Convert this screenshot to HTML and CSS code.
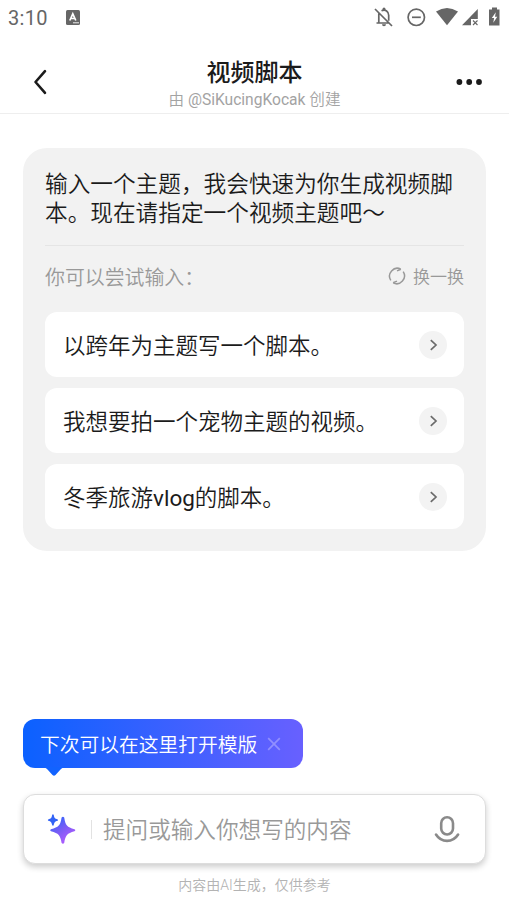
FILE: index.html
```html
<!DOCTYPE html>
<html lang="zh-CN">
<head>
<meta charset="utf-8">
<title>视频脚本</title>
<link rel="stylesheet" href="styles.css">
</head>
<body>
<div class="app">
  <div class="status">
    <span class="clock">3:10</span>
    <svg class="app-badge" width="14" height="15" viewBox="0 0 14 15"><rect width="14" height="15" rx="1.5" fill="#666"/><path d="M3.8 10.5 6.8 3.8 9.8 10.5M4.9 8.5h3.8" fill="none" stroke="#fff" stroke-width="1.7"/><path d="M7 12.8h6" stroke="#fff" stroke-width=".9"/></svg>
    <svg class="status-icons" width="143" height="34" viewBox="366 0 143 34">
      <g fill="none" stroke="#666" stroke-width="1.7">
        <path d="M375 9l17 17M378.8 13.500v9.200M376.500 23h13M381.500 10.800c4-2 7.200 1 7.200 4.500v5.500"/>
        <circle cx="416.300" cy="17.300" r="8.200"/><path d="M412 17.300h8.800"/>
      </g>
      <path d="M382.500 10V9a1.500 1.500 0 0 1 3 0v1zM382 24.200h4a2 2 0 0 1-4 0z" fill="#666"/>
      <path d="M436 11.500q11-7 22 0L447 25.300z" fill="#666"/>
      <path d="M477.800 9v10H471v6.300h-9z" fill="#666"/><path d="M473 20.500l4.500 4.500m0-4.500L473 25" stroke="#666" stroke-width="1.100"/>
      <path d="M492 7.500h5v2h2.500v16h-10.500v-16h3z" fill="#666"/><path d="M495.800 12.200l-4 5.800h2.300l-.8 4.700 4-6h-2.300z" fill="#fff"/>
    </svg>
  </div>

  <header class="header">
    <svg class="back" width="28" height="28" viewBox="0 0 28 28"><path d="M14 3.200 4.500 14 14 24.800" fill="none" stroke="#1b1b1b" stroke-width="2.600" stroke-linecap="round" stroke-linejoin="round"/></svg>
    <div class="heading">
      <h1>视频脚本</h1>
      <p>由 <span class="latin">@SiKucingKocak</span> 创建</p>
    </div>
    <svg class="more" width="28" height="8" viewBox="0 0 28 8" fill="#1b1b1b"><circle cx="4.400" cy="4" r="2.900"/><circle cx="14.200" cy="4" r="2.900"/><circle cx="24" cy="4" r="2.900"/></svg>
  </header>

  <main class="card">
    <p class="intro">输入一个主题，我会快速为你生成视频脚本。现在请指定一个视频主题吧～</p>
    <div class="hint">
      <span class="hint-label">你可以尝试输入：</span>
      <span class="refresh">
        <svg width="18" height="18" viewBox="0 0 18 18" fill="none" stroke="#999" stroke-width="1.500"><path d="M2.800 13.300A7.800 7.800 0 0 1 12.800 2.100M9 3.900l3.900-1.700M15.200 4.700A7.800 7.800 0 0 1 5.200 15.900M9 14.100l-3.900 1.700"/></svg>
        <span class="refresh-label">换一换</span>
      </span>
    </div>
    <ul class="options">
      <li><span>以跨年为主题写一个脚本。</span><i class="go"><svg width="28" height="28" viewBox="0 0 28 28"><path d="M11.800 9.200 17 14l-5.200 4.900" fill="none" stroke="#6b6b6b" stroke-width="1.700"/></svg></i></li>
      <li><span>我想要拍一个宠物主题的视频。</span><i class="go"><svg width="28" height="28" viewBox="0 0 28 28"><path d="M11.800 9.200 17 14l-5.200 4.900" fill="none" stroke="#6b6b6b" stroke-width="1.700"/></svg></i></li>
      <li><span>冬季旅游<span class="latin">vlog</span>的脚本。</span><i class="go"><svg width="28" height="28" viewBox="0 0 28 28"><path d="M11.800 9.200 17 14l-5.200 4.900" fill="none" stroke="#6b6b6b" stroke-width="1.700"/></svg></i></li>
    </ul>
  </main>

  <footer class="bottom">
    <div class="tip">
      <span>下次可以在这里打开模版</span>
      <svg width="14" height="14" viewBox="0 0 14 14"><path d="M1.200 1.200l11.600 11.600m0-11.600L1.200 12.800" stroke="#918fff" stroke-width="1.700"/></svg>
      <svg class="tail" width="24" height="10" viewBox="0 0 24 10"><path d="M0 0h24c-2.500 0-4 1-5.500 2.500l-5 5.500q-1.500 1.500-3 0l-5-5.500C4 1 2.500 0 0 0z" fill="#1263ff"/></svg>
    </div>
    <div class="composer">
      <svg class="spark" width="30" height="32" viewBox="0 0 30 32">
        <defs><linearGradient id="g" x1="0" y1="0" x2=".65" y2="1"><stop offset=".2" stop-color="#3b63fb"/><stop offset=".55" stop-color="#7b5cf5"/><stop offset="1" stop-color="#b45cff"/></linearGradient></defs>
        <path d="M15.600 4.500Q17 3 18.200 4.500C19.500 12.500 21 14 28.500 16.200q1.600 1 0 2C21 20.400 19.500 22 18.200 30q-1.300 1.500-2.600 0C14.300 22 12.800 20.400 5 18.200q-1.500-1 0-2C12.800 14 14.300 12.500 15.600 4.500z" fill="url(#g)"/>
        <path d="M6.200 1.800q.8-1 1.500 0C8.300 5 8.800 5.600 11.700 6.500q.8.600 0 1.200C8.800 8.500 8.300 9.100 7.700 12.300q-.7.900-1.500 0C5.600 9.100 5.100 8.500 2.200 7.700q-.8-.6 0-1.200C5.100 5.600 5.600 5 6.200 1.800z" fill="#3263f6"/>
      </svg>
      <span class="divider"></span>
      <span class="placeholder">提问或输入你想写的内容</span>
      <svg class="mic" width="26" height="30" viewBox="0 0 26 30" fill="none" stroke="#8a8a8a" stroke-width="2.600" stroke-linecap="round"><rect x="7.200" y="3.300" width="11.800" height="17.200" rx="5.900"/><path d="M2 20.500c5.300 8.500 16.800 8.500 22.100 0"/></svg>
    </div>
    <p class="note">内容由AI生成，仅供参考</p>
  </footer>
</div>
</body>
</html>
```
FILE: styles.css
```css
* { box-sizing: border-box; margin: 0; padding: 0; }
body {
  background: #fff;
  color: #1b1b1b;
  font-family: Roboto, "Noto Sans CJK SC", sans-serif;
  font-weight: 350;
}
svg { display: block; flex: none; }
.latin { font-weight: 400; }
.app { height: 906px; display: flex; flex-direction: column; overflow: hidden; }

.status { height: 34px; display: flex; align-items: center; padding-left: 8px; }
.clock { width: 58px; font-size: 20px; font-weight: 400; color: #666; letter-spacing: .3px; line-height: 34px; padding-top: 1px; }
.status-icons { margin-left: auto; }

.header {
  height: 80px;
  display: flex;
  align-items: center;
  justify-content: space-between;
  padding: 17px 26px 0 31px;
  border-bottom: 1px solid #eee;
}
.back, .more { width: 28px; }
.heading { text-align: center; padding-top: 6px; margin-left: -5px; }
.heading h1 { font-size: 24px; line-height: 30px; font-weight: 500; }
.heading p { font-size: 15.600px; line-height: 24px; color: #a3a3a3; }

.card {
  margin: 34px 23px 0;
  height: 403px;
  padding: 22px 22px 0;
  border-radius: 24px;
  background: #f2f2f2;
}
.intro {
  height: 75px;
  font-size: 22.670px;
  line-height: 29px;
  margin-right: -4px;
}
.hint {
  height: 67px;
  display: flex;
  align-items: center;
  justify-content: space-between;
  border-top: 1px solid #e5e5e5;
  color: #999;
  font-size: 19.900px;
  padding-bottom: 6px;
}
.refresh { display: flex; align-items: center; gap: 7px; font-size: 17px; }
.refresh-label { padding-bottom: 1px; }
.options { display: flex; flex-direction: column; gap: 11px; list-style: none; }
.options li {
  height: 65px;
  display: flex;
  align-items: center;
  justify-content: space-between;
  padding: 0 17px 0 18px;
  border-radius: 12px;
  background: #fff;
  font-size: 22.500px;
}
.options li > span { padding-bottom: 2px; }
.go { width: 28px; height: 28px; border-radius: 50%; background: #f3f3f3; }

.bottom { margin: auto 23px 0; height: 187px; }
.tip {
  position: relative;
  width: 280px;
  height: 49px;
  display: flex;
  align-items: center;
  gap: 10px;
  padding-left: 17px;
  border-radius: 12px;
  background: linear-gradient(90deg, #0b61ff, #6860ff);
  color: #fff;
  font-size: 19.750px;
}
.tail { position: absolute; left: 19px; top: 48px; }
.composer {
  height: 70px;
  margin-top: 26px;
  display: flex;
  align-items: center;
  padding: 0 25px 0 22px;
  border: 1px solid #ddd;
  border-radius: 12px;
  background: #fff;
  box-shadow: 0 3px 6px rgba(0, 0, 0, .2);
}
.divider { width: 1px; height: 19px; margin: 0 12px 0 15px; background: #e2e2e2; }
.placeholder { font-size: 22.600px; color: #999; padding-bottom: 2px; margin-left: -1px; }
.mic { margin-left: auto; }
.note { margin-top: 9px; text-align: center; font-size: 14px; line-height: 24px; color: #b3b3b3; }
```
